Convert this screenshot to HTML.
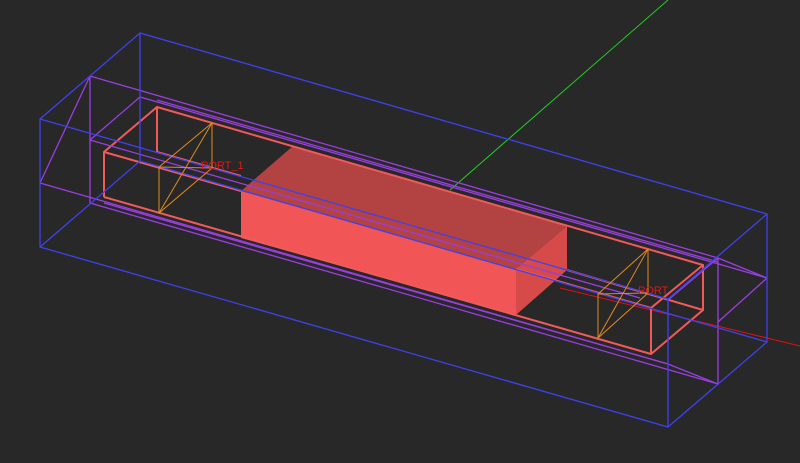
<!DOCTYPE html>
<html><head><meta charset="utf-8"><style>
html,body{margin:0;padding:0;background:#282828;}
svg{display:block}
text{font-family:"Liberation Sans",sans-serif;font-size:11px;fill:#e01818}
</style></head><body>
<svg width="800" height="463" viewBox="0 0 800 463" xmlns="http://www.w3.org/2000/svg">
<rect width="800" height="463" fill="#282828"/>
<line x1="450" y1="190" x2="668" y2="0" stroke="#20d020" stroke-width="1"/>
<line x1="560" y1="288" x2="800" y2="346" stroke="#e01010" stroke-width="1"/>
<polygon points="241,191 293,146 567,226 516,269" fill="#b34242"/>
<polygon points="516,269 567,226 567,270 516,315" fill="#d64a4a"/>
<polygon points="241,191 516,269 516,315 241,238" fill="#f25555"/>
<g stroke="#f05a5a" stroke-width="2" fill="none">
<polyline points="104,197 104,152 157,107 703,265 703,310 651,354 104,197"/>
<line x1="104" y1="152" x2="241" y2="191"/>
<line x1="516" y1="269" x2="651" y2="308"/>
<polyline points="651,354 651,308 703,265"/>
<line x1="157" y1="107" x2="157" y2="152"/>
<line x1="157" y1="152" x2="241" y2="176"/>
<line x1="567" y1="270" x2="703" y2="310"/>
</g>
<g stroke="#9a3ee0" stroke-width="1.3" fill="none">
<polyline points="40,183 90,76 718,258 718,384 90,203 90,76"/>
<line x1="40" y1="183" x2="668" y2="364"/>
<line x1="718" y1="258" x2="767" y2="278"/>
<line x1="718" y1="258" x2="668" y2="300"/>
<line x1="767" y1="278" x2="718" y2="322"/>
<line x1="668" y1="364" x2="718" y2="384"/>
<line x1="140" y1="97" x2="767" y2="278"/>
<line x1="140" y1="97" x2="90" y2="140"/>
<line x1="90" y1="140" x2="640" y2="298"/>
<line x1="104" y1="203" x2="668" y2="364"/>
<line x1="157" y1="100" x2="718" y2="262"/>
</g>
<g stroke="#4040f0" stroke-width="1.3" fill="none">
<polygon points="40,119 140,33 767,214 767,342 668,427 40,247"/>
<line x1="40" y1="119" x2="668" y2="299"/>
<line x1="668" y1="299" x2="767" y2="214"/>
<line x1="668" y1="299" x2="668" y2="427"/>
<line x1="140" y1="33" x2="140" y2="161"/>
<line x1="140" y1="161" x2="40" y2="247"/>
<line x1="140" y1="161" x2="767" y2="342"/>
</g>
<g stroke="#e08a20" stroke-width="1" fill="none">
<polygon points="212,123 212,168 159,213 159,167"/>
<line x1="212" y1="123" x2="159" y2="213"/>
<line x1="212" y1="168" x2="159" y2="167"/>
<polygon points="648,249 648,293 598,338 598,294"/>
<line x1="648" y1="249" x2="598" y2="338"/>
<line x1="648" y1="293" x2="598" y2="294"/>
</g>
<text x="201" y="169">PORT_1</text>
<text x="638" y="294">PORT</text>
</svg>
</body></html>
